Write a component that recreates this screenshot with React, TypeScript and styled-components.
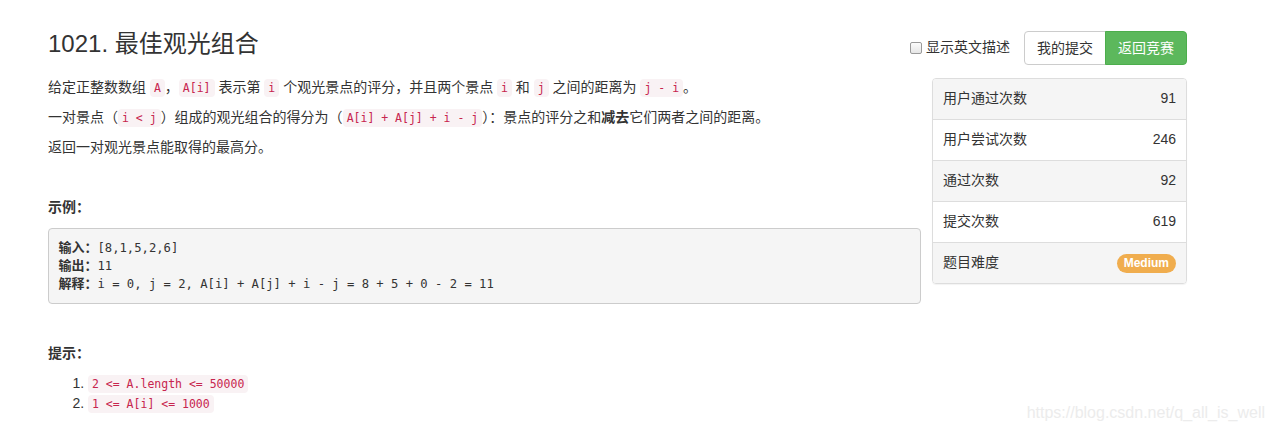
import React from "react";
import styled, { createGlobalStyle } from "styled-components";

const Global = createGlobalStyle`
  html, body { margin: 0; padding: 0; background: #fff; }
  body {
    font-family: "Liberation Sans", Arial, "Noto Sans CJK SC", sans-serif;
    font-size: 14px;
    line-height: 1.42857;
    color: #333;
  }
  * { box-sizing: border-box; }
`;

const Page = styled.div`
  position: relative;
  width: 1273px;
  height: 430px;
  padding: 31px 86px 0 48px;
  overflow: hidden;
`;

const Header = styled.div`
  display: flex;
  justify-content: space-between;
  align-items: flex-start;
`;

const Title = styled.h3`
  margin: 0;
  font-size: 24px;
  font-weight: 400;
  line-height: 1.1;
  color: #333;
`;

const Controls = styled.div`
  display: flex;
  align-items: center;
`;

const CheckLabel = styled.label`
  display: flex;
  align-items: center;
  margin-right: 14px;
  font-size: 14px;
  color: #333;
`;

const Box = styled.span`
  display: inline-block;
  width: 12px;
  height: 12px;
  border: 1px solid #9a9a9a;
  border-radius: 2px;
  background: linear-gradient(#fcfcfc, #e6e6e6);
  margin-right: 4px;
  margin-left: 2px;
`;

const BtnGroup = styled.div`
  display: flex;
`;

const Btn = styled.button<{ $primary?: boolean }>`
  height: 34px;
  padding: 6px 12px;
  font-family: inherit;
  font-size: 14px;
  line-height: 20px;
  border: 1px solid ${(p) => (p.$primary ? "#4cae4c" : "#ccc")};
  background: ${(p) => (p.$primary ? "#5cb85c" : "#fff")};
  color: ${(p) => (p.$primary ? "#fff" : "#333")};
  border-radius: ${(p) => (p.$primary ? "0 4px 4px 0" : "4px 0 0 4px")};
  margin-left: ${(p) => (p.$primary ? "-1px" : "0")};
  cursor: pointer;
`;

const Row = styled.div`
  display: flex;
  align-items: flex-start;
  gap: 11px;
  margin-top: 13px;
`;

const Main = styled.div`
  width: 873px;
  flex: none;
`;

const P = styled.p`
  margin: 0 0 10px;
  min-height: 20px;
`;

const Code = styled.code`
  font-family: "DejaVu Sans Mono", "Liberation Mono", monospace;
  font-size: 11.5px;
  padding: 2px 4px;
  color: #c7254e;
  background: #f9f2f4;
  border-radius: 4px;
`;

const Pre = styled.div`
  margin: 0 0 10px;
  padding: 9.5px;
  font-family: "DejaVu Sans Mono", "Liberation Mono", monospace;
  font-size: 12.2px;
  color: #333;
  background: #f5f5f5;
  border: 1px solid #ccc;
  border-radius: 4px;
`;

const PreLine = styled.div`
  height: 18.4px;
  line-height: 18.4px;
  white-space: pre;

  strong {
    font-family: "Noto Sans CJK SC", sans-serif;
    font-size: 13px;
    line-height: 0;
  }
`;

const List = styled.ol`
  margin: 0 0 10px;
  padding-left: 40px;
`;

const Panel = styled.div`
  width: 255px;
  flex: none;
  border: 1px solid #ddd;
  border-radius: 4px;
  overflow: hidden;
  box-shadow: 0 1px 1px rgba(0, 0, 0, 0.05);
`;

const PanelRow = styled.div<{ $shade: boolean }>`
  display: flex;
  justify-content: space-between;
  align-items: center;
  height: 41px;
  padding: 0 10px;
  background: ${(p) => (p.$shade ? "#f5f5f5" : "#fff")};
  border-top: 1px solid #ddd;
  &:first-child { border-top: none; height: 40px; }
`;

const Badge = styled.span`
  display: inline-block;
  padding: 3px 7px;
  font-size: 12px;
  font-weight: 700;
  line-height: 1.1;
  color: #fff;
  background: #f0ad4e;
  border-radius: 10px;
`;

const Watermark = styled.div`
  position: absolute;
  right: 8px;
  bottom: 5px;
  font-family: "Liberation Sans", Arial, sans-serif;
  font-size: 16px;
  color: #ececec;
`;

const stats: [string, React.ReactNode][] = [
  ["用户通过次数", "91"],
  ["用户尝试次数", "246"],
  ["通过次数", "92"],
  ["提交次数", "619"],
  ["题目难度", <Badge key="b">Medium</Badge>],
];

export default function App() {
  return (
    <Page>
      <Global />
      <Header>
        <Title>1021. 最佳观光组合</Title>
        <Controls>
          <CheckLabel>
            <Box />
            显示英文描述
          </CheckLabel>
          <BtnGroup>
            <Btn>我的提交</Btn>
            <Btn $primary>返回竞赛</Btn>
          </BtnGroup>
        </Controls>
      </Header>
      <Row>
        <Main>
          <P>
            给定正整数数组 <Code>A</Code>，<Code>A[i]</Code> 表示第 <Code>i</Code> 个观光景点的评分，并且两个景点 <Code>i</Code> 和 <Code>j</Code> 之间的距离为 <Code>j - i</Code>。
          </P>
          <P>
            一对景点（<Code>i &lt; j</Code>）组成的观光组合的得分为（<Code>A[i] + A[j] + i - j</Code>）：景点的评分之和<strong>减去</strong>它们两者之间的距离。
          </P>
          <P>返回一对观光景点能取得的最高分。</P>
          <P>&nbsp;</P>
          <P>
            <strong>示例：</strong>
          </P>
          <Pre>
            <PreLine>
              <strong>输入：</strong>[8,1,5,2,6]
            </PreLine>
            <PreLine>
              <strong>输出：</strong>11
            </PreLine>
            <PreLine>
              <strong>解释：</strong>i = 0, j = 2, A[i] + A[j] + i - j = 8 + 5 + 0 - 2 = 11
            </PreLine>
          </Pre>
          <P>&nbsp;</P>
          <P>
            <strong>提示：</strong>
          </P>
          <List>
            <li>
              <Code>2 &lt;= A.length &lt;= 50000</Code>
            </li>
            <li>
              <Code>1 &lt;= A[i] &lt;= 1000</Code>
            </li>
          </List>
        </Main>
        <Panel>
          {stats.map(([label, value], i) => (
            <PanelRow key={label} $shade={i % 2 === 0}>
              <span>{label}</span>
              <span>{value}</span>
            </PanelRow>
          ))}
        </Panel>
      </Row>
      <Watermark>https://blog.csdn.net/q_all_is_well</Watermark>
    </Page>
  );
}
